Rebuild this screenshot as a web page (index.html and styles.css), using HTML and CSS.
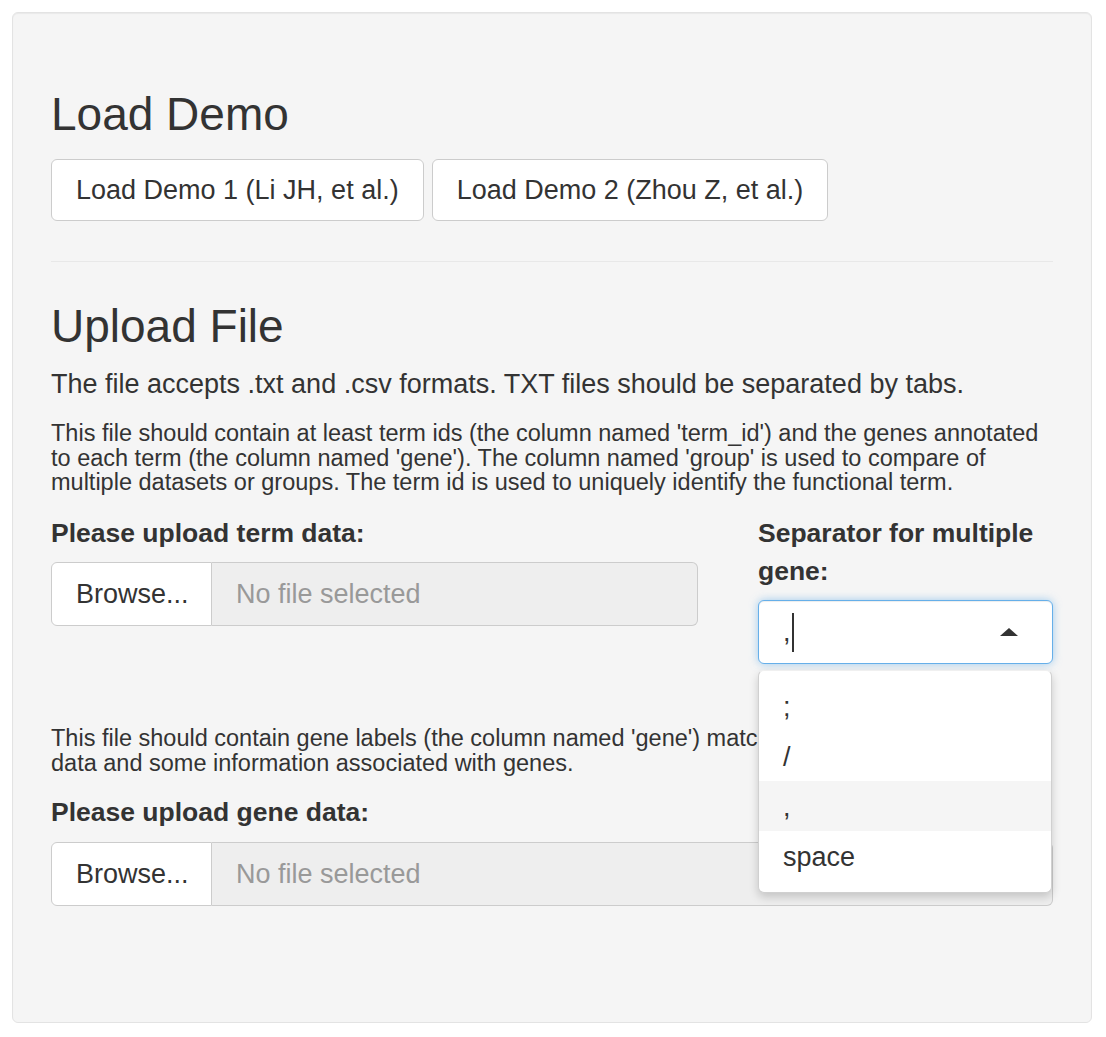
FILE: index.html
```html
<!DOCTYPE html>
<html>
<head>
<meta charset="utf-8">
<link rel="stylesheet" href="styles.css">
</head>
<body>
<div class="well">
  <h3 class="title first">Load Demo</h3>
  <div class="btn-row">
    <button class="btn">Load Demo 1 (Li JH, et al.)</button>
    <button class="btn">Load Demo 2 (Zhou Z, et al.)</button>
  </div>
  <hr class="divider">
  <h3 class="title">Upload File</h3>
  <p class="lead-text">The file accepts .txt and .csv formats. TXT files should be separated by tabs.</p>
  <p class="note">This file should contain at least term ids (the column named 'term_id') and the genes annotated to each term (the column named 'gene'). The column named 'group' is used to compare of multiple datasets or groups. The term id is used to uniquely identify the functional term.</p>
  <div class="form-row">
    <div class="col-main">
      <label class="ctl-label">Please upload term data:</label>
      <div class="input-group">
        <span class="browse">Browse...</span>
        <span class="file-name">No file selected</span>
      </div>
    </div>
    <div class="col-side">
      <label class="ctl-label">Separator for multiple gene:</label>
      <div class="selectize">
        <div class="select-input">
          <span class="sel-value">,</span><span class="caret-line"></span>
          <span class="arrow-up"></span>
        </div>
        <div class="dropdown">
          <div class="option">;</div>
          <div class="option">/</div>
          <div class="option active">,</div>
          <div class="option">space</div>
        </div>
      </div>
    </div>
  </div>
  <p class="note note-gene">This file should contain gene labels (the column named 'gene') matching the term<br>data and some information associated with genes.</p>
  <label class="ctl-label">Please upload gene data:</label>
  <div class="input-group">
    <span class="browse">Browse...</span>
    <span class="file-name">No file selected</span>
  </div>
</div>
</body>
</html>
```
FILE: styles.css
```css
html, body {
  margin: 0;
  padding: 0;
  background: #ffffff;
}
body {
  font-family: "Liberation Sans", Arial, sans-serif;
  font-size: 27px;
  line-height: 38px;
  color: #333333;
}
.well {
  margin: 12px 14px 0 12px;
  padding: 0 38px 116px 38px;
  background: #f5f5f5;
  border: 1px solid #e3e3e3;
  border-radius: 6px;
  box-shadow: inset 0 1px 1px rgba(0,0,0,0.05);
}
.title {
  font-size: 46px;
  font-weight: 500;
  line-height: 50.2px;
  margin: 0;
  color: #333333;
}
.title.first {
  padding-top: 76px;
}
.btn-row {
  display: flex;
  gap: 8px;
  margin-top: 20px;
}
.btn {
  font-family: inherit;
  font-size: 27px;
  line-height: 38px;
  color: #333333;
  background: #ffffff;
  border: 1px solid #cccccc;
  border-radius: 6px;
  padding: 11px 24px;
  margin: 0;
}
.divider {
  border: 0;
  border-top: 1px solid #e8e8e8;
  margin: 40px 0 39px 0;
}
.lead-text {
  margin: 14px 0 18px 0;
}
.note {
  font-size: 23.5px;
  line-height: 24.5px;
  margin: 0 0 19px 0;
}
.note.note-gene {
  margin-bottom: 18px;
}
.ctl-label {
  display: block;
  font-size: 26.5px;
  font-weight: bold;
  margin-bottom: 10.5px;
}
.form-row {
  display: grid;
  grid-template-columns: 647px 1fr;
  column-gap: 60px;
  align-items: start;
  margin-bottom: 62px;
}
.input-group {
  display: flex;
  height: 64px;
}
.browse {
  box-sizing: border-box;
  width: 161px;
  padding: 12px 0 12px 24px;
  background: #ffffff;
  border: 1px solid #cccccc;
  border-radius: 6px 0 0 6px;
  line-height: 38px;
}
.file-name {
  box-sizing: border-box;
  flex: 1;
  padding: 12px 25px 12px 24px;
  background: #eeeeee;
  border: 1px solid #cccccc;
  border-left: 0;
  border-radius: 0 6px 6px 0;
  color: #999999;
  line-height: 38px;
}
.selectize {
  position: relative;
}
.select-input {
  box-sizing: border-box;
  height: 64px;
  display: flex;
  align-items: center;
  padding: 0 34px 0 24px;
  background: #ffffff;
  border: 1px solid #66afe9;
  border-radius: 6px;
  box-shadow: inset 0 1px 1px rgba(0,0,0,0.075), 0 0 8px rgba(102,175,233,0.6);
}
.sel-value {
  line-height: 38px;
}
.caret-line {
  width: 2px;
  height: 39px;
  background: #333333;
  margin-left: 1px;
}
.arrow-up {
  margin-left: auto;
  width: 0;
  height: 0;
  border-left: 9px solid transparent;
  border-right: 9px solid transparent;
  border-bottom: 8px solid #333333;
}
.dropdown {
  position: absolute;
  top: calc(100% + 6px);
  left: 0;
  right: 1px;
  z-index: 10;
  padding: 10px 0 11px 0;
  background: #ffffff;
  border: 1px solid #d0d0d0;
  border-top-color: #f0f0f0;
  border-radius: 6px;
  box-shadow: 0 4px 10px rgba(0,0,0,0.18);
}
.option {
  height: 50px;
  line-height: 52px;
  padding-left: 24px;
}
.option.active {
  background: #f5f5f5;
}
```
